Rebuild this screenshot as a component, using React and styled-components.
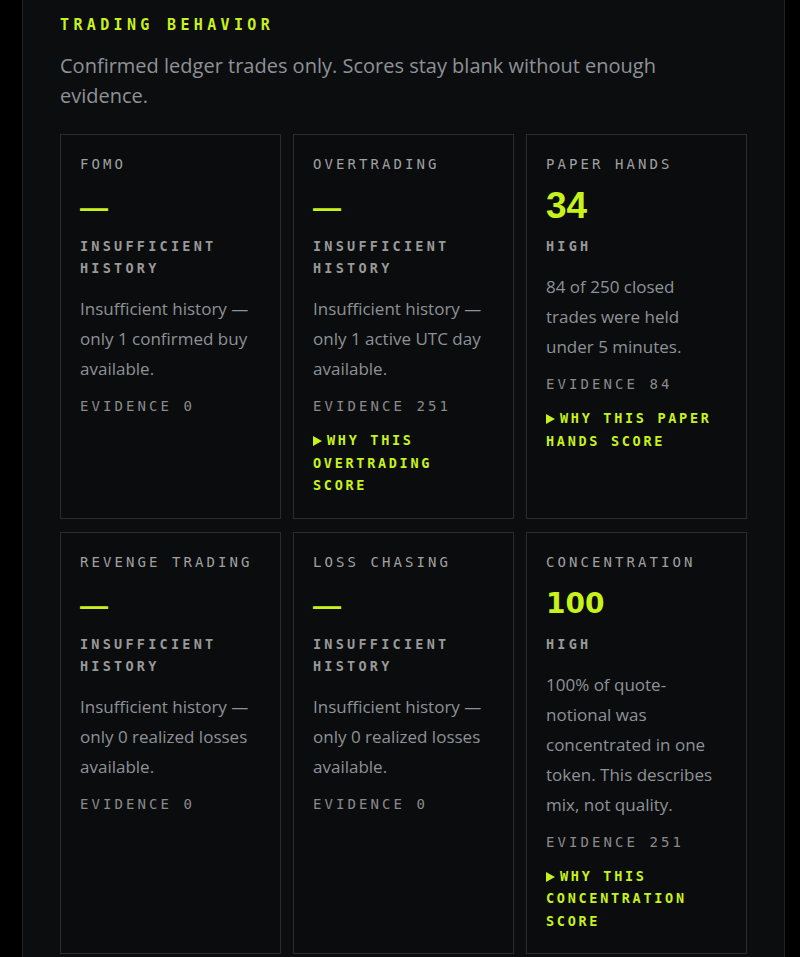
import styled, { createGlobalStyle } from 'styled-components'

const GlobalStyle = createGlobalStyle`
  html, body {
    margin: 0;
    padding: 0;
    background: #000;
  }
  * { box-sizing: border-box; }
`;

const Page = styled.div`
  min-height: 957px;
  padding-left: 22px;
  width: 785px;
`;

const Panel = styled.section`
  background: #0c0d0f;
  border: 1px solid #222427;
  border-top: none;
  padding: 14px 37px 40px;
  min-height: 1000px;
`;

const Heading = styled.h2`
  margin: 0;
  font-family: "DejaVu Sans Mono", monospace;
  font-weight: 700;
  font-size: 15px;
  line-height: 22px;
  letter-spacing: 0.29em;
  color: #c8f21c;
`;

const Lead = styled.p`
  margin: 15px 0 23px;
  font-family: "Open Sans", sans-serif;
  font-size: 20px;
  line-height: 30px;
  color: #8e9297;
  max-width: 620px;
`;

const Grid = styled.div`
  display: grid;
  grid-template-columns: repeat(3, 221px);
  gap: 13px 12px;
`;

const Card = styled.article`
  background: #0b0c0e;
  border: 1px solid #2a2c2f;
  padding: 19px 19px 21px;
  display: flex;
  flex-direction: column;
`;

const Label = styled.div`
  font-family: "DejaVu Sans Mono", monospace;
  font-size: 14px;
  line-height: 20px;
  letter-spacing: 0.22em;
  color: #a0a0a0;
`;

const Value = styled.div`
  margin: 14px 0 11px;
  height: 36px;
  line-height: 36px;
  font-family: ${({ wide }) => (wide ? '"DejaVu Sans"' : '"Liberation Sans"')}, sans-serif;
  font-weight: 700;
  font-size: ${({ size }) => size}px;
  color: #c8f21c;
`;

const Dash = styled.div`
  margin: 14px 0 11px;
  height: 36px;
  display: flex;
  align-items: center;
  padding-top: 4px;
  color: #c8f21c;
  font-family: "Liberation Sans", sans-serif;
  font-weight: 700;
  font-size: 28px;
  line-height: 1;
`;

const Status = styled.div`
  font-family: "DejaVu Sans Mono", monospace;
  font-weight: 700;
  font-size: 13.5px;
  line-height: 22px;
  letter-spacing: 0.24em;
  color: #999;
`;

const Desc = styled.p`
  margin: 15px 0 0;
  font-family: "Open Sans", sans-serif;
  font-size: 17px;
  line-height: 30px;
  color: #8e9297;
`;

const Evidence = styled.div`
  margin-top: 11px;
  font-family: "DejaVu Sans Mono", monospace;
  font-size: 14px;
  line-height: 22px;
  letter-spacing: 0.22em;
  color: #8a8a8a;
`;

const Why = styled.div`
  margin-top: 12px;
  font-family: "DejaVu Sans Mono", monospace;
  font-weight: 700;
  font-size: 13.5px;
  line-height: 22.5px;
  letter-spacing: 0.2em;
  color: #c8f21c;
  cursor: pointer;

  svg {
    width: 9px;
    height: 10px;
    margin-right: 5px;
    vertical-align: -1px;
    fill: currentColor;
  }
`;

const metrics = [
  { label: 'FOMO', status: 'INSUFFICIENT HISTORY', desc: 'Insufficient history — only 1 confirmed buy available.', evidence: 0 },
  { label: 'OVERTRADING', status: 'INSUFFICIENT HISTORY', desc: 'Insufficient history — only 1 active UTC day available.', evidence: 251, why: 'OVERTRADING' },
  { label: 'PAPER HANDS', value: '34', status: 'HIGH', desc: '84 of 250 closed trades were held under 5 minutes.', evidence: 84, why: 'PAPER HANDS' },
  { label: 'REVENGE TRADING', status: 'INSUFFICIENT HISTORY', desc: 'Insufficient history — only 0 realized losses available.', evidence: 0 },
  { label: 'LOSS CHASING', status: 'INSUFFICIENT HISTORY', desc: 'Insufficient history — only 0 realized losses available.', evidence: 0 },
  { label: 'CONCENTRATION', value: '100', status: 'HIGH', desc: '100% of quote-notional was concentrated in one token. This describes mix, not quality.', evidence: 251, why: 'CONCENTRATION' },
];

function MetricCard({ m }) {
  const long = m.value && m.value.length > 2;
  return (
    <Card>
      <Label>{m.label}</Label>
      {m.value ? (
        <Value size={long ? 28 : 37} wide={long}>{m.value}</Value>
      ) : (
        <Dash>—</Dash>
      )}
      <Status>{m.status}</Status>
      <Desc>{m.desc}</Desc>
      <Evidence>EVIDENCE {m.evidence}</Evidence>
      {m.why && (
        <Why>
          <svg viewBox="0 0 9 10"><path d="M0 0L9 5L0 10Z" /></svg>
          WHY THIS {m.why} SCORE
        </Why>
      )}
    </Card>
  );
}

export default function App() {
  return (
    <Page>
      <GlobalStyle />
      <Panel>
        <Heading>TRADING BEHAVIOR</Heading>
        <Lead>Confirmed ledger trades only. Scores stay blank without enough evidence.</Lead>
        <Grid>
          {metrics.map(m => <MetricCard key={m.label} m={m} />)}
        </Grid>
      </Panel>
    </Page>
  );
}
